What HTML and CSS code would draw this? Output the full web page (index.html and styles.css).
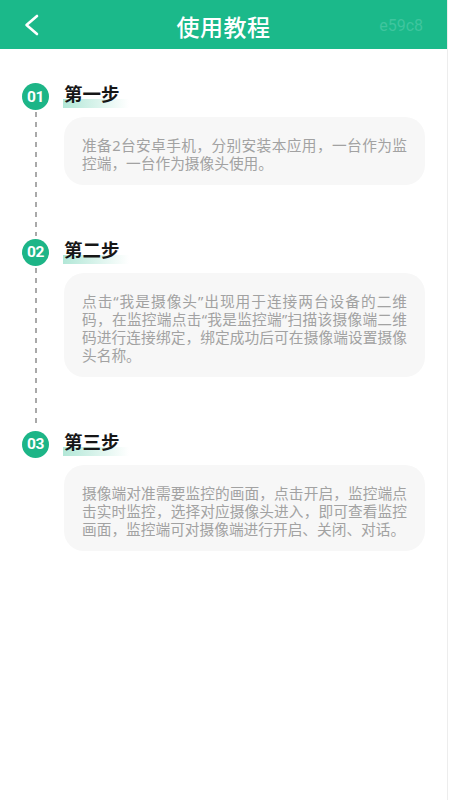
FILE: index.html
```html
<!DOCTYPE html>
<html lang="zh-CN">
<head>
<meta charset="utf-8">
<title>使用教程</title>
<link rel="stylesheet" href="styles.css">
</head>
<body>
<div class="page">
  <header class="topbar">
    <div class="left">
      <svg class="back" width="15" height="22" viewBox="0 0 15 22"><path d="M13 2 L2.5 11 L13 20" fill="none" stroke="#ffffff" stroke-width="2.6" stroke-linecap="round" stroke-linejoin="round"/></svg>
    </div>
    <h1 class="title">使用教程</h1>
    <div class="right"><span class="tag">e59c8</span></div>
  </header>
  <main class="steps">
    <section class="step">
      <div class="rail"><span class="num">01</span><span class="line"></span></div>
      <div class="body">
        <h2 class="step-title"><span>第一步</span></h2>
        <p class="card">准备2台安卓手机，分别安装本应用，一台作为监控端，一台作为摄像头使用。</p>
      </div>
    </section>
    <section class="step">
      <div class="rail"><span class="num">02</span><span class="line"></span></div>
      <div class="body">
        <h2 class="step-title"><span>第二步</span></h2>
        <p class="card">点击“我是摄像头”出现用于连接两台设备的二维码，在监控端点击“我是监控端”扫描该摄像端二维码进行连接绑定，绑定成功后可在摄像端设置摄像头名称。</p>
      </div>
    </section>
    <section class="step last">
      <div class="rail"><span class="num">03</span></div>
      <div class="body">
        <h2 class="step-title"><span>第三步</span></h2>
        <p class="card">摄像端对准需要监控的画面，点击开启，监控端点击实时监控，选择对应摄像头进入，即可查看监控画面，监控端可对摄像端进行开启、关闭、对话。</p>
      </div>
    </section>
  </main>
</div>
</body>
</html>
```

FILE: styles.css
```css
* { box-sizing: border-box; }
html, body { margin: 0; padding: 0; background: #ffffff; }
body { font-family: "Noto Sans CJK SC", "Noto Sans", sans-serif; }

.page {
  width: 448px;
  min-height: 800px;
  border-right: 1px solid #ededed;
  background: #ffffff;
}

.topbar {
  height: 49px;
  background: #1bb98a;
  display: grid;
  grid-template-columns: 1fr auto 1fr;
  align-items: center;
  padding: 0 24px;
}
.left { display: flex; align-items: center; }
.back { display: block; margin-top: 1px; }
.title {
  margin: 0;
  font-size: 23px;
  font-weight: 500;
  color: #ffffff;
  letter-spacing: 0.5px;
  line-height: 1;
  padding-top: 3px;
}
.right { display: flex; justify-content: flex-end; }
.tag {
  font-family: Roboto, "Liberation Sans", sans-serif;
  font-size: 16px;
  color: #3fc59e;
  padding-top: 2px;
}

.steps { padding-top: 34px; }

.step {
  display: flex;
  padding-left: 22px;
}
.rail {
  width: 27px;
  flex: none;
  display: flex;
  flex-direction: column;
  align-items: center;
}
.num {
  width: 27px;
  height: 27px;
  border-radius: 50%;
  background: #1db587;
  color: #ffffff;
  font-family: Roboto, "Liberation Sans", sans-serif;
  font-weight: 700;
  font-size: 15.5px;
  letter-spacing: -0.3px;
  display: flex;
  align-items: center;
  justify-content: center;
  flex: none;
}
.line {
  flex: 1;
  width: 2px;
  margin-top: 2px;
  margin-bottom: 3px;
  background: repeating-linear-gradient(to bottom, #a9a9a9 0 5px, transparent 5px 10px);
}

.body {
  flex: 1;
  padding-left: 15px;
  padding-right: 22px;
  padding-bottom: 54px;
}
.step.last .body { padding-bottom: 0; }

.step-title {
  margin: 0;
  height: 27px;
  display: flex;
  align-items: flex-start;
  font-size: 18.5px;
  font-weight: 700;
  color: #161616;
}
.step-title span {
  line-height: 21px;
  padding: 0 9px 4px 1px;
  margin-left: -1px;
  background: linear-gradient(to right, rgba(29, 185, 138, 0.34), rgba(29, 185, 138, 0)) no-repeat left bottom / 100% 9px;
}

.card {
  margin: 7px 0 0;
  background: #f7f7f7;
  border-radius: 20px;
  padding: 19px 18px 12px;
  font-family: "Noto Sans", "Noto Sans CJK SC", sans-serif;
  font-size: 14.7px;
  line-height: 18.3px;
  color: #a2a2a2;
  text-align: justify;
}
```
